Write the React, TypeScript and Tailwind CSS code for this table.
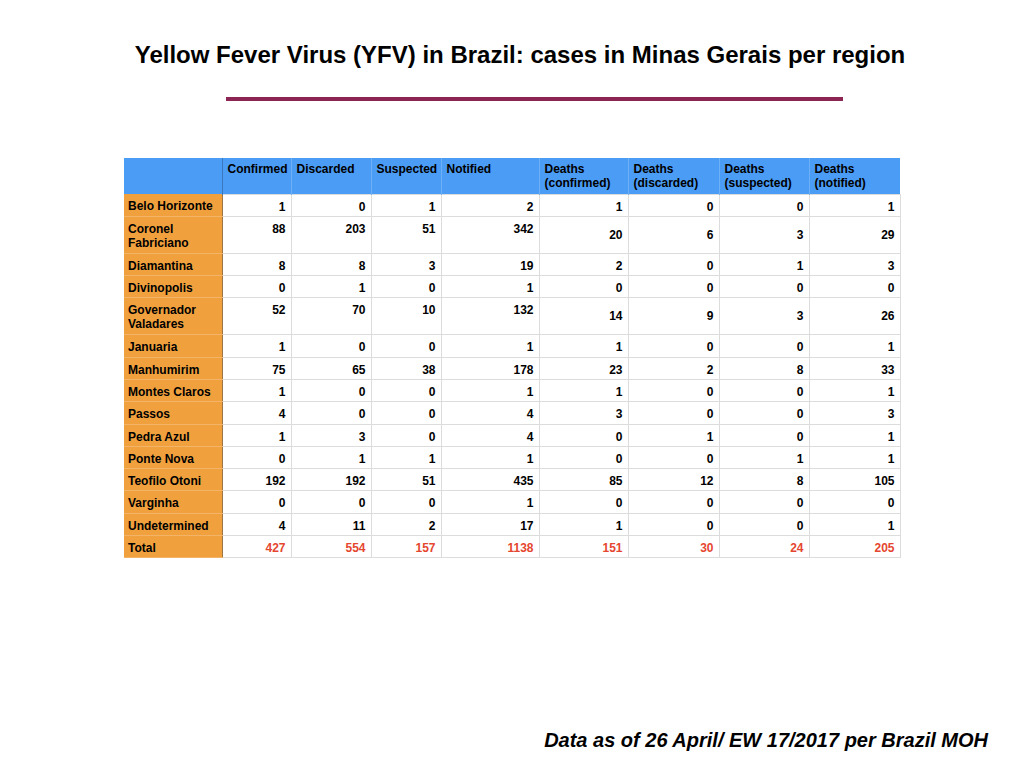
import React from "react";

type Row = { name: string[]; v: number[]; tall?: boolean; total?: boolean };

const rows: Row[] = [
  { name: ["Belo Horizonte"], v: [1, 0, 1, 2, 1, 0, 0, 1] },
  { name: ["Coronel", "Fabriciano"], v: [88, 203, 51, 342, 20, 6, 3, 29], tall: true },
  { name: ["Diamantina"], v: [8, 8, 3, 19, 2, 0, 1, 3] },
  { name: ["Divinopolis"], v: [0, 1, 0, 1, 0, 0, 0, 0] },
  { name: ["Governador", "Valadares"], v: [52, 70, 10, 132, 14, 9, 3, 26], tall: true },
  { name: ["Januaria"], v: [1, 0, 0, 1, 1, 0, 0, 1] },
  { name: ["Manhumirim"], v: [75, 65, 38, 178, 23, 2, 8, 33] },
  { name: ["Montes Claros"], v: [1, 0, 0, 1, 1, 0, 0, 1] },
  { name: ["Passos"], v: [4, 0, 0, 4, 3, 0, 0, 3] },
  { name: ["Pedra Azul"], v: [1, 3, 0, 4, 0, 1, 0, 1] },
  { name: ["Ponte Nova"], v: [0, 1, 1, 1, 0, 0, 1, 1] },
  { name: ["Teofilo Otoni"], v: [192, 192, 51, 435, 85, 12, 8, 105] },
  { name: ["Varginha"], v: [0, 0, 0, 1, 0, 0, 0, 0] },
  { name: ["Undetermined"], v: [4, 11, 2, 17, 1, 0, 0, 1] },
  { name: ["Total"], v: [427, 554, 157, 1138, 151, 30, 24, 205], total: true },
];

const headers: string[][] = [
  ["Confirmed"],
  ["Discarded"],
  ["Suspected"],
  ["Notified"],
  ["Deaths", "(confirmed)"],
  ["Deaths", "(discarded)"],
  ["Deaths", "(suspected)"],
  ["Deaths", "(notified)"],
];

const widths = ["w-[69px]", "w-[80px]", "w-[70px]", "w-[98px]", "w-[89px]", "w-[91px]", "w-[90px]", "w-[91px]"];

export default function App() {
  return (
    <div
      className="w-[1024px] h-[768px] bg-white flex flex-col text-black"
      style={{ fontFamily: '"Liberation Sans", Arial, Helvetica, sans-serif' }}
    >
      <div className="pt-[41px] flex justify-center pl-[16px]">
        <h1 className="text-[24px] leading-[28px] font-bold">
          Yellow Fever Virus (YFV) in Brazil: cases in Minas Gerais per region
        </h1>
      </div>
      <div className="mt-[28px] ml-[226px] w-[617px] h-[4px] bg-[#8c2553]" />
      <div className="mt-[57px] ml-[124px]">
        <table className="border-collapse table-fixed text-[12px] leading-[14px] font-bold">
          <colgroup>
            <col className="w-[98px]" />
            {widths.map((w, i) => (
              <col key={i} className={w} />
            ))}
          </colgroup>
          <thead>
            <tr className="h-[36px] bg-[#4b9cf5]">
              <th className="border-r border-r-[#3a78bd] p-0" />
              {headers.map((h, i) => (
                <th
                  key={i}
                  className="align-top text-left font-bold pl-[5px] pt-[4px] border-l border-[#6cb0f8] first:border-l-0"
                >
                  {h.map((l, j) => (
                    <div key={j}>{l}</div>
                  ))}
                </th>
              ))}
            </tr>
          </thead>
          <tbody>
            {rows.map((r, ri) => (
              <tr key={ri} className={r.tall ? "h-[37px]" : "h-[22.3px]"}>
                <td className="bg-[#f1a03e] align-top pl-[4px] pt-[5px] border-b border-b-[#f4b468] border-r border-r-[#9c7649]">
                  {r.name.map((l, j) => (
                    <div key={j}>{l}</div>
                  ))}
                </td>
                {r.v.map((v, ci) => (
                  <td
                    key={ci}
                    className={
                      "text-right pr-[5px] border border-[#dcdcdc] " +
                      (r.tall && ci >= 4 ? "align-middle " : "align-top pt-[5px] ") +
                      (r.total ? "text-[#e5462f]" : "")
                    }
                  >
                    {v}
                  </td>
                ))}
              </tr>
            ))}
          </tbody>
        </table>
      </div>
      <div className="mt-auto pb-[16px] pr-[36px] flex justify-end">
        <p className="text-[20px] leading-[24px] font-bold italic">
          Data as of 26 April/ EW 17/2017 per Brazil MOH
        </p>
      </div>
    </div>
  );
}
